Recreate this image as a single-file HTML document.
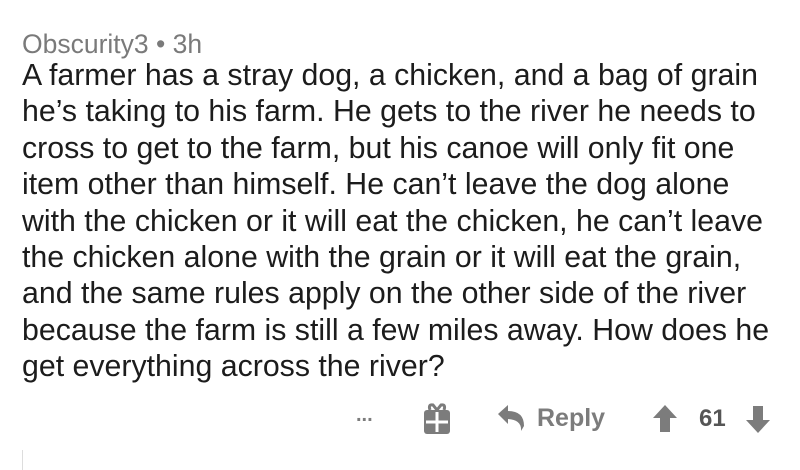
<!DOCTYPE html>
<html><head><style>
body{margin:0;width:800px;height:470px;background:#fff;overflow:hidden;font-family:"Liberation Sans",sans-serif;position:relative}
.hdr{position:absolute;left:22px;top:29px;font-size:26.5px;color:#7a7a7a}
.txt{position:absolute;left:22px;top:58px;font-size:30.3px;line-height:36.4px;color:#1c1c1c}
.txt div{white-space:nowrap}
.ft{position:absolute;top:400px;color:#7c7c7c;font-weight:bold}
.bar{position:absolute;left:22px;top:450px;width:1px;height:20px;background:#ddd}
</style></head><body>
<div class="hdr">Obscurity3 • 3h</div>
<div class="txt">
<div>A farmer has a stray dog, a chicken, and a bag of grain</div>
<div>he’s taking to his farm. He gets to the river he needs to</div>
<div>cross to get to the farm, but his canoe will only fit one</div>
<div>item other than himself. He can’t leave the dog alone</div>
<div>with the chicken or it will eat the chicken, he can’t leave</div>
<div>the chicken alone with the grain or it will eat the grain,</div>
<div>and the same rules apply on the other side of the river</div>
<div>because the farm is still a few miles away. How does he</div>
<div>get everything across the river?</div>
</div>
<div class="ft" style="left:356px;top:404px;font-size:20px">...</div>
<svg class="ft" style="left:422px;top:402px" width="30" height="34" viewBox="0 0 30 34"><rect x="2" y="8" width="26" height="24" rx="3" fill="#7c7c7c"/><path d="M8 8 Q6 2 11 3 L15 8 L19 3 Q24 2 22 8" stroke="#7c7c7c" stroke-width="3" fill="none"/><path d="M15 10 V30 M4 20 H26" stroke="#fff" stroke-width="3"/></svg>
<svg class="ft" style="left:496px;top:404px" width="32" height="28" viewBox="0 0 32 28"><path d="M2 10 L12 1 V7 Q28 7 28 22 L25 27 Q26 16 12 15 V20 Z" fill="#7c7c7c"/></svg>
<div class="ft" style="left:537px;top:404px;font-size:25px">Reply</div>
<svg class="ft" style="left:652px;top:404px" width="26" height="30" viewBox="0 0 26 30"><path d="M13 1 L25 14 H18 V28 H8 V14 H1 Z" fill="#7c7c7c"/></svg>
<div class="ft" style="left:699px;top:405px;font-size:24px;color:#555">61</div>
<svg class="ft" style="left:745px;top:404px" width="26" height="30" viewBox="0 0 26 30"><path d="M13 29 L25 16 H18 V2 H8 V16 H1 Z" fill="#7c7c7c"/></svg>
<div class="bar"></div>
</body></html>
